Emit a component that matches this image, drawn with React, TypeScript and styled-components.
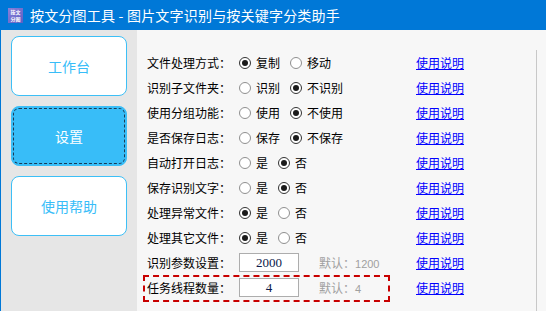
import React from "react";
import styled, { createGlobalStyle } from "styled-components";

const Global = createGlobalStyle`
  html, body { margin: 0; padding: 0; height: 100%; overflow: hidden; }
  body { font-family: "Noto Sans CJK SC", "Noto Sans", sans-serif; }
  #root { height: 100%; }
`;

const Window = styled.div`
  width: 546px;
  height: 311px;
  display: flex;
  flex-direction: column;
  background: #f7f7f7;
`;

const TitleBar = styled.div`
  height: 30px;
  background: #0078d7;
  display: flex;
  align-items: center;
  padding-left: 8px;
  gap: 7px;
  flex-shrink: 0;
`;

const AppIcon = styled.div`
  width: 15px;
  height: 15px;
  background: linear-gradient(135deg, #8a7fd8, #5b5fc4);
  display: flex;
  flex-direction: column;
  align-items: center;
  justify-content: center;
  color: #fff;
  font-size: 5px;
  line-height: 7.2px;
  font-weight: bold;
  overflow: hidden;
`;

const TitleText = styled.div`
  color: #fff;
  font-size: 14px;
  letter-spacing: 0.2px;
`;

const Body = styled.div`
  flex: 1;
  display: flex;
  min-height: 0;
`;

const Sidebar = styled.div`
  width: 126px;
  border-left: 1px solid #0078d7;
  background: #e6e6e6;
  display: flex;
  flex-direction: column;
  gap: 10px;
  padding: 6px 0 0 10px;
  box-sizing: content-box;
  flex-shrink: 0;
`;

const NavButton = styled.div<{ $active?: boolean }>`
  position: relative;
  width: 116px;
  height: 60px;
  box-sizing: border-box;
  border: 1px solid #3dbff6;
  border-radius: 8px;
  background: ${(p) => (p.$active ? "#38bdf8" : "#ffffff")};
  color: ${(p) => (p.$active ? "#ffffff" : "#38bdf8")};
  display: flex;
  align-items: center;
  justify-content: center;
  font-size: 14px;
  &::after {
    content: "";
    display: ${(p) => (p.$active ? "block" : "none")};
    position: absolute;
    inset: 1px;
    border: 1px dashed #1a3a55;
    border-radius: 6px;
  }
`;

const Content = styled.div`
  flex: 1;
  padding: 20px 9px 0 0;
  display: flex;
  min-width: 0;
`;

const List = styled.div`
  flex: 1;
  border-right: 1px solid #c8c8c8;
  padding-left: 10px;
  display: flex;
  flex-direction: column;
`;

const Row = styled.div`
  height: 25px;
  display: flex;
  align-items: center;
  font-size: 12px;
  color: #000;
`;

const Main = styled.div<{ $highlight?: boolean }>`
  position: relative;
  display: flex;
  align-items: center;
  width: 269px;
  height: 100%;
  &::before {
    content: "";
    display: ${(p) => (p.$highlight ? "block" : "none")};
    position: absolute;
    left: -4px;
    top: 0px;
    width: 247px;
    height: 27px;
    box-sizing: border-box;
    border: 2px dashed #c80000;
  }
`;

const Label = styled.div`
  width: 92px;
  flex-shrink: 0;
  white-space: nowrap;
`;

const Options = styled.div`
  display: flex;
  align-items: center;
  gap: 10px;
`;

const Option = styled.div`
  display: flex;
  align-items: center;
  gap: 5px;
`;

const RadioCircle = styled.span<{ $checked?: boolean }>`
  width: 12px;
  height: 12px;
  box-sizing: border-box;
  border-radius: 50%;
  border: 1px solid ${(p) => (p.$checked ? "#333" : "#8f8f8f")};
  background: #fff;
  display: flex;
  align-items: center;
  justify-content: center;
  &::after {
    content: "";
    width: 6px;
    height: 6px;
    border-radius: 50%;
    background: #1a1a1a;
    display: ${(p) => (p.$checked ? "block" : "none")};
  }
`;

const NumberBox = styled.div`
  width: 60px;
  height: 19px;
  box-sizing: border-box;
  border: 1px solid #adadad;
  background: #fff;
  display: flex;
  align-items: center;
  justify-content: center;
  font-family: "Liberation Serif", serif;
  font-size: 13px;
  color: #0c1a4a;
`;

const DefaultHint = styled.span`
  margin-left: 10px;
  color: #a0a0a0;
  font-size: 12px;
  display: flex;
  align-items: baseline;
  small {
    font-family: "Liberation Sans", sans-serif;
    font-size: 11px;
  }
`;

const HelpLink = styled.a`
  color: #0000ff;
  text-decoration: underline;
  font-size: 12px;
  cursor: pointer;
`;

type Setting =
  | { label: string; kind: "radio"; options: string[]; selected: number }
  | { label: string; kind: "number"; value: string; def: string; highlight?: boolean };

const settings: Setting[] = [
  { label: "文件处理方式：", kind: "radio", options: ["复制", "移动"], selected: 0 },
  { label: "识别子文件夹：", kind: "radio", options: ["识别", "不识别"], selected: 1 },
  { label: "使用分组功能：", kind: "radio", options: ["使用", "不使用"], selected: 1 },
  { label: "是否保存日志：", kind: "radio", options: ["保存", "不保存"], selected: 1 },
  { label: "自动打开日志：", kind: "radio", options: ["是", "否"], selected: 1 },
  { label: "保存识别文字：", kind: "radio", options: ["是", "否"], selected: 1 },
  { label: "处理异常文件：", kind: "radio", options: ["是", "否"], selected: 0 },
  { label: "处理其它文件：", kind: "radio", options: ["是", "否"], selected: 0 },
  { label: "识别参数设置：", kind: "number", value: "2000", def: "1200" },
  { label: "任务线程数量：", kind: "number", value: "4", def: "4", highlight: true },
];

export default function App() {
  return (
    <Window>
      <Global />
      <TitleBar>
        <AppIcon>
          <span>按文</span>
          <span>分图</span>
        </AppIcon>
        <TitleText>按文分图工具 - 图片文字识别与按关键字分类助手</TitleText>
      </TitleBar>
      <Body>
        <Sidebar>
          <NavButton>工作台</NavButton>
          <NavButton $active>设置</NavButton>
          <NavButton>使用帮助</NavButton>
        </Sidebar>
        <Content>
          <List>
            {settings.map((s) => (
              <Row key={s.label}>
                <Main $highlight={s.kind === "number" && !!s.highlight}>
                  <Label>{s.label}</Label>
                  {s.kind === "radio" ? (
                    <Options>
                      {s.options.map((o, i) => (
                        <Option key={o}>
                          <RadioCircle $checked={i === s.selected} />
                          <span>{o}</span>
                        </Option>
                      ))}
                    </Options>
                  ) : (
                    <Options>
                      <NumberBox>{s.value}</NumberBox>
                      <DefaultHint>
                        默认：<small>{s.def}</small>
                      </DefaultHint>
                    </Options>
                  )}
                </Main>
                <HelpLink>使用说明</HelpLink>
              </Row>
            ))}
          </List>
        </Content>
      </Body>
    </Window>
  );
}
